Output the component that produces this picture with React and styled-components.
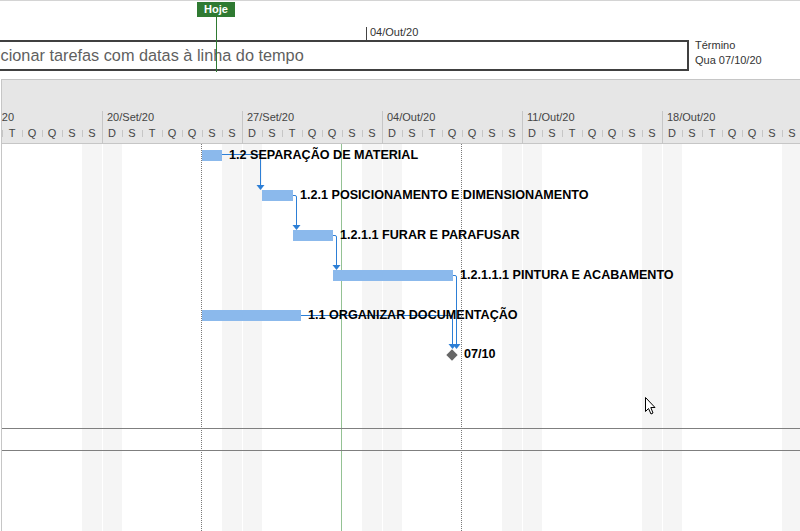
import React from 'react';
import styled, { createGlobalStyle } from 'styled-components';

const GlobalStyle = createGlobalStyle`
  html, body {
    margin: 0;
    padding: 0;
    background: #fff;
    overflow: hidden;
  }
  body {
    font-family: "Liberation Sans", Arial, sans-serif;
  }
`;

// chart origin: Sunday 13/Set/20 sits 40px left of the chart's left edge
const DAY = 20;
const ORIGIN = -40;
const CHART_X = 2;
const CHART_Y = 144;

const weeks = ['13/Set/20', '20/Set/20', '27/Set/20', '04/Out/20', '11/Out/20', '18/Out/20'];
const dayLetters = ['D', 'S', 'T', 'Q', 'Q', 'S', 'S'];

const tasks = [
  { x: 202, w: 20, y: 150, label: '1.2 SEPARAÇÃO DE MATERIAL' },
  { x: 262, w: 31, y: 190, label: '1.2.1 POSICIONAMENTO E DIMENSIONAMENTO' },
  { x: 293, w: 40, y: 230, label: '1.2.1.1 FURAR E PARAFUSAR' },
  { x: 333, w: 120, y: 270, label: '1.2.1.1.1 PINTURA E ACABAMENTO' },
  { x: 202, w: 99, y: 310, label: '1.1 ORGANIZAR DOCUMENTAÇÃO' },
];

const links = [
  { d: 'M222 154.5 H260.5 V186', tip: [260.5, 190] },
  { d: 'M293 195.5 H295 Q296.5 195.5 296.5 197 V226', tip: [296.5, 230] },
  { d: 'M333 235.5 H335 Q336.5 235.5 336.5 237 V266', tip: [336.5, 270] },
  { d: 'M453 275.5 H455 Q456.5 275.5 456.5 277 V345', tip: [456.5, 349] },
  { d: 'M301 315.5 H452.5 V345', tip: [452.5, 349] },
];

const Page = styled.div`
  width: 800px;
  height: 531px;
  display: flex;
  flex-direction: column;
  overflow: hidden;
`;

/* ---------- timeline strip ---------- */

const TimelinePane = styled.div`
  position: relative;
  height: 79px;
  box-sizing: border-box;
  border-top: 1px solid #d4d4d4;
  padding-top: 39px;
  flex-shrink: 0;
`;

const TimelineRow = styled.div`
  display: flex;
  align-items: flex-start;
`;

const TimelineBar = styled.div`
  flex-shrink: 0;
  margin-left: -40px;
  width: 729px;
  height: 31px;
  box-sizing: border-box;
  border: 2px solid #404040;
  padding-left: 15px;
  display: flex;
  align-items: center;
  font-size: 16.3px;
  color: #5f5f5f;
  white-space: nowrap;
`;

const FinishInfo = styled.div`
  margin-left: 6px;
  margin-top: -2px;
  font-size: 11px;
  line-height: 15px;
  color: #333;
  white-space: nowrap;
`;

const TodayFlag = styled.div`
  position: absolute;
  left: 197px;
  top: 1px;
  width: 38px;
  height: 15px;
  background: #2f7a32;
  color: #fff;
  font-size: 11px;
  font-weight: bold;
  line-height: 15px;
  text-align: center;
`;

const TodayStem = styled.div`
  position: absolute;
  left: 216px;
  top: 15px;
  width: 1px;
  height: 56px;
  background: #2f7a32;
`;

const DateTick = styled.div`
  position: absolute;
  left: 366px;
  top: 26px;
  height: 13px;
  border-left: 1px solid #444;
  padding-left: 3px;
  font-size: 11px;
  line-height: 11px;
  color: #333;
`;

/* ---------- gantt ---------- */

const GanttPane = styled.div`
  flex: 1;
  min-height: 0;
  display: flex;
  flex-direction: column;
  border-top: 1px solid #c6c6c6;
  border-left: 1px solid #c6c6c6;
  margin-left: 1px;
  overflow: hidden;
`;

const ScaleHeader = styled.div`
  height: 64px;
  box-sizing: border-box;
  flex-shrink: 0;
  background: #e6e6e6;
  border-bottom: 1px solid #c6c6c6;
  display: flex;
  align-items: flex-end;
  overflow: hidden;
`;

const Weeks = styled.div`
  display: flex;
  margin-left: ${ORIGIN}px;
`;

const Week = styled.div`
  position: relative;
  flex-shrink: 0;
  width: ${DAY * 7}px;
  display: flex;
  flex-direction: column;

  &::before {
    content: '';
    position: absolute;
    left: 0;
    top: 0;
    bottom: 0;
    width: 1px;
    background: #c6c6c6;
  }
`;

const WeekLabel = styled.div`
  height: 12px;
  line-height: 12px;
  padding-left: 5px;
  font-size: 11px;
  color: #444;
  white-space: nowrap;
`;

const DaysRow = styled.div`
  display: flex;
  height: 20px;
`;

const DayCell = styled.div`
  position: relative;
  width: ${DAY}px;
  line-height: 20px;
  text-align: center;
  font-size: 11px;
  color: #444;

  & + &::before {
    content: '';
    position: absolute;
    left: 0;
    top: 7px;
    height: 7px;
    width: 1px;
    background: #c6c6c6;
  }
`;

const Chart = styled.div`
  position: relative;
  flex: 1;
  overflow: hidden;
`;

const DayColumns = styled.div`
  display: flex;
  height: 100%;
  margin-left: ${ORIGIN}px;
`;

const DayColumn = styled.div`
  flex-shrink: 0;
  width: ${DAY}px;
  box-sizing: border-box;
  background: ${(p) => (p.$weekend ? '#f5f5f5' : 'transparent')};
  border-left: ${(p) => (p.$sunday ? '1px solid #fff' : 'none')};
`;

const HLine = styled.div`
  position: absolute;
  left: 0;
  right: 0;
  top: ${(p) => p.$y - CHART_Y}px;
  height: 1px;
  background: #7f7f7f;
`;

const VLine = styled.div`
  position: absolute;
  top: 0;
  bottom: 0;
  left: ${(p) => p.$x - CHART_X}px;
  border-left: 1px ${(p) => (p.$today ? 'solid #94c294' : 'dotted #7a7a7a')};
`;

const Links = styled.svg`
  position: absolute;
  left: 0;
  top: 0;
  overflow: visible;
`;

const Bar = styled.div`
  position: absolute;
  left: ${(p) => p.$x - CHART_X}px;
  top: ${(p) => p.$y - CHART_Y}px;
  width: ${(p) => p.$w}px;
  height: 11px;
  background: #8bb9ec;
`;

const TaskLabel = styled.div`
  position: absolute;
  left: ${(p) => p.$x - CHART_X}px;
  top: ${(p) => p.$y - CHART_Y}px;
  font-size: 12.6px;
  font-weight: bold;
  line-height: 15px;
  color: #000;
  white-space: nowrap;
`;

const Milestone = styled.div`
  position: absolute;
  left: ${452 - 4 - CHART_X}px;
  top: ${355 - 4 - CHART_Y}px;
  width: 8px;
  height: 8px;
  background: #666;
  transform: rotate(45deg);
`;

const Cursor = styled.svg`
  position: absolute;
  left: ${644 - CHART_X}px;
  top: ${396 - CHART_Y}px;
`;

const App = () => {
  const days = [];
  for (let i = 0; i < 44; i++) days.push(i % 7);

  return (
    <>
      <GlobalStyle />
      <Page>
        <TimelinePane>
          <TodayFlag>Hoje</TodayFlag>
          <DateTick>04/Out/20</DateTick>
          <TimelineRow>
            <TimelineBar>Adicionar tarefas com datas à linha do tempo</TimelineBar>
            <FinishInfo>
              <div>Término</div>
              <div>Qua 07/10/20</div>
            </FinishInfo>
          </TimelineRow>
          <TodayStem />
        </TimelinePane>

        <GanttPane>
          <ScaleHeader>
            <Weeks>
              {weeks.map((w) => (
                <Week key={w}>
                  <WeekLabel>{w}</WeekLabel>
                  <DaysRow>
                    {dayLetters.map((d, i) => (
                      <DayCell key={i}>{d}</DayCell>
                    ))}
                  </DaysRow>
                </Week>
              ))}
            </Weeks>
          </ScaleHeader>

          <Chart>
            <DayColumns>
              {days.map((d, i) => (
                <DayColumn key={i} $weekend={d === 0 || d === 6} $sunday={d === 0} />
              ))}
            </DayColumns>

            <VLine $x={201} />
            <VLine $x={461} />
            <VLine $x={341} $today />
            <HLine $y={428} />
            <HLine $y={450} />

            {tasks.map((t) => (
              <Bar key={t.label} $x={t.x} $y={t.y} $w={t.w} />
            ))}

            <Links width="800" height="400">
              <g transform={`translate(${-CHART_X} ${-CHART_Y})`}>
                {links.map((l, i) => (
                  <g key={i}>
                    <path d={l.d} fill="none" stroke="#2d7fd6" strokeWidth="1" />
                    <polygon
                      points={`${l.tip[0] - 4},${l.tip[1] - 5} ${l.tip[0] + 4},${l.tip[1] - 5} ${l.tip[0]},${l.tip[1]}`}
                      fill="#2d7fd6"
                    />
                  </g>
                ))}
              </g>
            </Links>

            {tasks.map((t) => (
              <TaskLabel key={t.label} $x={t.x + t.w + 7} $y={t.y - 2}>
                {t.label}
              </TaskLabel>
            ))}

            <Milestone />
            <TaskLabel $x={464} $y={347}>07/10</TaskLabel>

            <Cursor width="13" height="20" viewBox="0 0 13 20">
              <path
                d="M1.5 1.5 V15.5 L4.5 12.5 L7 18 L9 17 L6.8 11.5 H11 Z"
                fill="#fff"
                stroke="#000"
                strokeWidth="1"
                strokeLinejoin="miter"
              />
            </Cursor>
          </Chart>
        </GanttPane>
      </Page>
    </>
  );
};

export default App;
